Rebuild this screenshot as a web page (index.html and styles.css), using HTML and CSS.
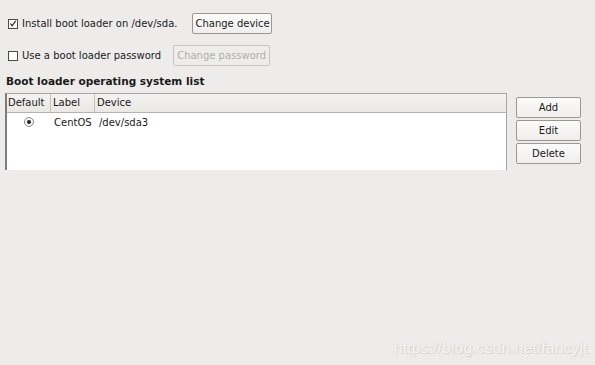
FILE: index.html
```html
<!DOCTYPE html>
<html>
<head>
<meta charset="utf-8">
<link rel="stylesheet" href="styles.css">
</head>
<body>
<div class="page">
  <div class="row row-install">
    <span class="check checked"><svg width="9" height="9" viewBox="0 0 9 9"><path d="M1.5 4.5 L3.5 7 L7.5 1.5" fill="none" stroke="#222" stroke-width="1.3"/></svg></span>
    <span class="lbl">Install boot loader on /dev/sda.</span>
    <button class="btn btn-device">Change device</button>
  </div>
  <div class="row row-pass">
    <span class="check"></span>
    <span class="lbl">Use a boot loader password</span>
    <button class="btn btn-pass disabled">Change password</button>
  </div>
  <div class="heading">Boot loader operating system list</div>
  <div class="listarea">
    <div class="list">
      <div class="thead">
        <div class="th c1">Default</div>
        <div class="th c2">Label</div>
        <div class="th c3">Device</div>
      </div>
      <div class="tr">
        <div class="td c1"><span class="radio"><span class="dot"></span></span></div>
        <div class="td c2">CentOS</div>
        <div class="td c3">/dev/sda3</div>
      </div>
    </div>
    <div class="side">
      <button class="btn sbtn">Add</button>
      <button class="btn sbtn">Edit</button>
      <button class="btn sbtn">Delete</button>
    </div>
  </div>
  <div class="watermark">https://blog.csdn.net/fancyjt</div>
</div>
</body>
</html>
```
FILE: styles.css
```css
html, body {
  margin: 0;
  padding: 0;
  background: #edecea;
}
body {
  width: 595px;
  height: 365px;
  overflow: hidden;
  font-family: "DejaVu Sans", sans-serif;
  font-size: 10px;
  color: #1a1a1a;
}
.page {
  position: relative;
  width: 595px;
  height: 365px;
}
.row {
  display: flex;
  align-items: center;
  height: 21px;
  white-space: nowrap;
}
.row-install {
  padding-top: 13px;
  padding-left: 8px;
}
.row-pass {
  margin-top: 11px;
  padding-left: 8px;
}
.check {
  width: 8px;
  height: 8px;
  border: 1px solid #4a4a4a;
  background: #fff;
  box-sizing: content-box;
  display: inline-flex;
  align-items: center;
  justify-content: center;
  flex: none;
}
.check svg { display: block; }
.lbl {
  margin-left: 4px;
}
.btn {
  font-family: "DejaVu Sans", sans-serif;
  font-size: 10px;
  color: #1a1a1a;
  background: linear-gradient(#fbfbfa, #efeeec);
  border: 1px solid #9a9893;
  border-radius: 2px;
  height: 21px;
  padding: 0 2px;
  margin: 0;
  box-sizing: border-box;
  line-height: 19px;
  white-space: nowrap;
  flex: none;
}
.btn-device {
  margin-left: 15px;
  width: 80px;
}
.btn-pass {
  margin-left: 12px;
  width: 97px;
}
.disabled {
  color: #b0aea9;
  border-color: #c8c6c1;
  background: #eeedeb;
}
.heading {
  font-weight: bold;
  font-size: 10.5px;
  margin-top: 8px;
  padding-left: 6px;
  height: 14px;
  line-height: 14px;
}
.listarea {
  display: flex;
  margin-top: 5px;
  padding-left: 5px;
}
.list {
  width: 502px;
  height: 77px;
  box-sizing: border-box;
  border: 1px solid #a8a6a1;
  border-left: 2px solid #7e7c78;
  border-bottom: none;
  background: #fff;
}
.thead {
  display: flex;
  height: 19px;
  background: linear-gradient(#f4f3f1, #e9e8e5);
  border-bottom: 1px solid #b5b3ae;
  box-sizing: border-box;
  white-space: nowrap;
}
.th {
  line-height: 18px;
  padding-left: 1px;
  box-sizing: border-box;
  overflow: hidden;
}
.th + .th {
  border-left: 1px solid #c4c2bd;
  padding-left: 2px;
}
.c1 { width: 43px; flex: none; }
.c2 { width: 44px; flex: none; }
.c3 { flex: 1; }
.tr {
  display: flex;
  height: 18px;
  align-items: center;
  white-space: nowrap;
}
.td.c1 {
  display: flex;
  justify-content: center;
}
.td.c2 { padding-left: 4px; }
.td.c3 { padding-left: 1px; }
.radio {
  width: 8px;
  height: 8px;
  border-radius: 50%;
  border: 1px solid #8a8883;
  background: #f6f5f3;
  display: inline-flex;
  align-items: center;
  justify-content: center;
}
.dot {
  width: 4px;
  height: 4px;
  border-radius: 50%;
  background: #222;
}
.side {
  display: flex;
  flex-direction: column;
  gap: 2px;
  margin-left: 9px;
  margin-top: 4px;
}
.sbtn {
  width: 65px;
  height: 21px;
}
.watermark {
  position: absolute;
  left: 394px;
  top: 339px;
  font-family: "Liberation Sans", Arial, sans-serif;
  font-size: 15.5px;
  letter-spacing: 0.2px;
  color: #f8f8f7;
  text-shadow: 0 0 1px #c9c7c3, 1px 1px 1px #d5d3cf;
}
```
